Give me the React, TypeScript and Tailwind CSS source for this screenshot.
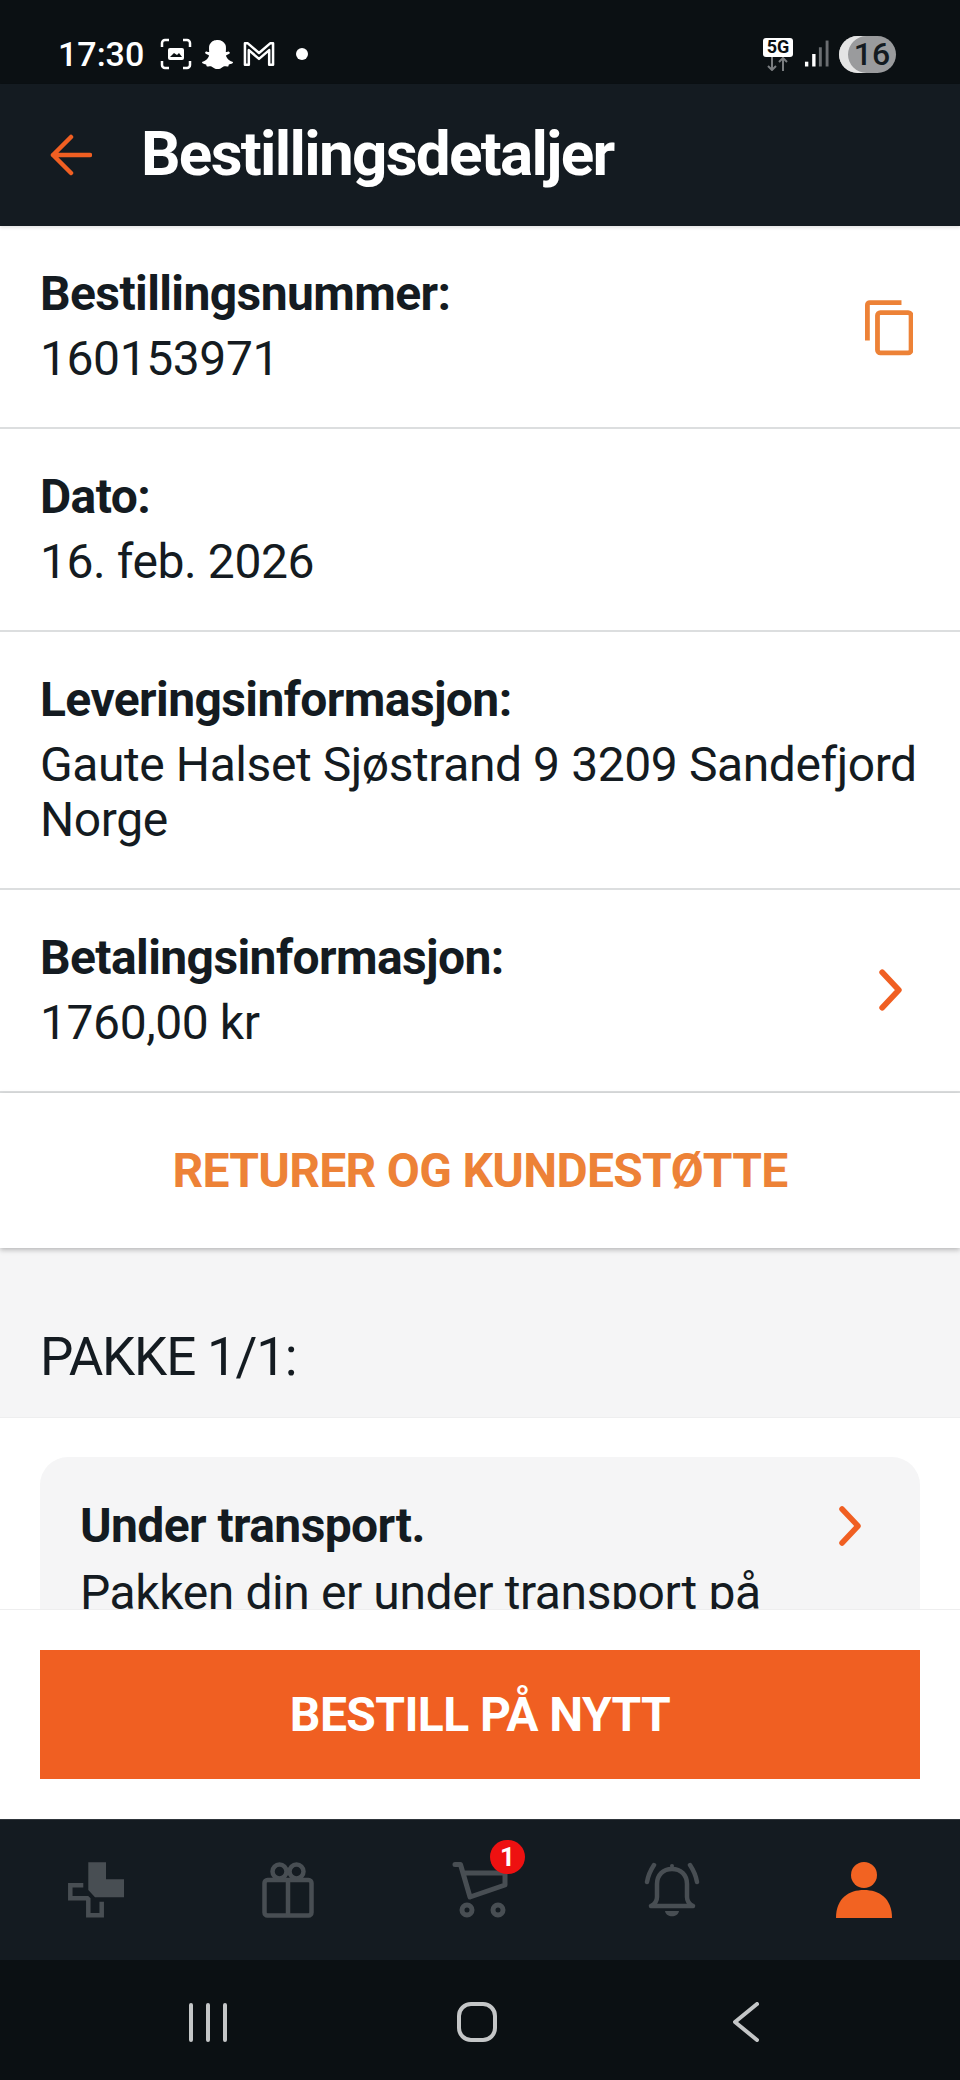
import { FaSnapchatGhost } from "react-icons/fa";

const Row = ({ title, children, icon }: { title: string; children: React.ReactNode; icon?: React.ReactNode }) => (
  <div className="flex items-center justify-between border-b-2 border-[#dcdedf] bg-white pt-[40px] pb-[41px] pl-[40px] pr-[30px]">
    <div>
      <div className="mb-[9px] text-[48px] leading-[56px] font-bold tracking-[-0.6px] text-[#141b21]">{title}</div>
      <div className="text-[48px] leading-[55px] tracking-[-0.42px] text-[#141b21]">{children}</div>
    </div>
    {icon}
  </div>
);

const Chevron = ({ className }: { className: string }) => (
  <svg className={className} viewBox="0 0 24 40" fill="none" stroke="#f05f22" strokeWidth="5.500" strokeLinecap="round" strokeLinejoin="round">
    <path d="M4 3 L20 20 L4 37" />
  </svg>
);

const StatusBar = () => (
  <div className="flex h-[84px] items-center justify-between bg-[#0b1013] pl-[58px] pr-[64px] pt-[24px]">
    <div className="flex items-center">
      <span className="text-[34px] leading-none font-medium text-white">17:30</span>
      <svg className="ml-[16px] h-[32px] w-[32px]" viewBox="0 0 32 32" fill="none" stroke="white" strokeWidth="2.500">
        <path d="M2 9V5a3 3 0 0 1 3-3h4M23 2h4a3 3 0 0 1 3 3v4M30 23v4a3 3 0 0 1-3 3h-4M9 30H5a3 3 0 0 1-3-3v-4" />
        <rect x="8" y="10" width="16" height="12" rx="2" fill="white" stroke="none" />
        <path d="M10 19l4-4 3 2 2-2 3 4z" fill="#0b1013" stroke="none" />
      </svg>
      <FaSnapchatGhost className="ml-[10px] h-[31px] w-[31px] text-white" />
      <svg className="ml-[10px] h-[26px] w-[32px]" viewBox="0 0 33 26" fill="none" stroke="white" strokeWidth="2.600" strokeLinejoin="round">
        <path d="M2 24V2h3l11.500 10L28 2h3v22h-4V9l-10.500 9L6 9v15z" />
      </svg>
      <div className="ml-[21px] h-[12px] w-[12px] rounded-full bg-white" />
    </div>
    <div className="flex items-center">
      <div className="flex w-[30px] flex-col items-center">
        <div className="flex h-[19px] w-[30px] items-center justify-center rounded-[3px] bg-white text-[18px] leading-none font-bold text-[#0b1013]">5G</div>
        <svg className="h-[14px] w-[24px]" viewBox="0 0 24 14" fill="none" stroke="#7a7d80" strokeWidth="2">
          <path d="M6 0v13M2 9l4 4 4-4M17 14V1M13 5l4-4 4 4" />
        </svg>
      </div>
      <svg className="ml-[11px] h-[28px] w-[25px]" viewBox="0 0 26 28">
        <rect x="1" y="22" width="3.500" height="5" fill="white" />
        <rect x="8.500" y="14" width="3.500" height="13" fill="white" />
        <rect x="15.500" y="7" width="3" height="20" fill="#6b6e71" />
        <rect x="22.500" y="0" width="3" height="27" fill="#6b6e71" />
      </svg>
      <div className="ml-[10px] flex h-[37px] w-[57px] items-center justify-center overflow-hidden rounded-full bg-[#9a9b9d] pl-[9px] text-[32px] font-medium text-[#141b21] [box-shadow:inset_9px_0_0_#e4e4e4]">
        16
      </div>
    </div>
  </div>
);

const NavBar = () => (
  <div className="grid h-[141px] grid-cols-5 justify-items-center border-t border-[#30363b] bg-[#141b21] pt-[42px]">
    <svg className="h-[56px] w-[56px]" viewBox="0 0 56 56">
      <path d="M20.300 0.300H38V17.300H56V35.300H27L20.300 28z" fill="#484e53" />
      <path d="M15.300 23.300H2.300V36.300H19.300L20.300 37.300V53.300H33.700V39.700" fill="none" stroke="#484e53" strokeWidth="4.500" />
    </svg>
    <svg className="h-[56px] w-[52px]" viewBox="0 0 52 56" fill="none" stroke="#484e53" strokeWidth="4.500" strokeLinejoin="round">
      <rect x="2.500" y="18" width="47" height="35.500" rx="3" />
      <path d="M26 18v35.500" />
      <circle cx="17.500" cy="9.500" r="7" />
      <circle cx="34.500" cy="9.500" r="7" />
    </svg>
    <div className="relative h-[56px] w-[56px]">
      <svg className="h-[56px] w-[56px]" viewBox="0 0 56 56" fill="none" stroke="#484e53" strokeWidth="5" strokeLinejoin="round" strokeLinecap="round">
        <path d="M3 2.500H8.500L18 35 53 23V11H12" />
        <circle cx="15" cy="48" r="5" />
        <circle cx="46" cy="48" r="5" />
      </svg>
      <div className="absolute top-[-22px] left-[38px] flex h-[34px] w-[35px] items-center justify-center rounded-full bg-[#ee1111] text-[26px] font-bold text-white">1</div>
    </div>
    <svg className="h-[56px] w-[56px]" viewBox="0 0 56 56" fill="none" stroke="#484e53" strokeWidth="4.500" strokeLinejoin="round" strokeLinecap="round">
      <path d="M7 44H49M7 44c4-2 6-5 6-9V22c0-9 6-15 15-15s15 6 15 15V35c0 4 2 7 6 9" />
      <path d="M3 20c1-6 3-11 7-17M53 20c-1-6-3-11-7-17" />
      <path d="M21 49h14c-1 7-13 7-14 0z" fill="#484e53" stroke="none" />
      <circle cx="28" cy="4" r="2" fill="#484e53" stroke="none" />
    </svg>
    <svg className="h-[56px] w-[56px]" viewBox="0 0 56 56" fill="#f26322">
      <circle cx="28" cy="13" r="13" />
      <path d="M0 56c0-20 13-28 28-28s28 8 28 28z" />
    </svg>
  </div>
);

const SystemNav = () => (
  <div className="flex h-[120px] items-start bg-[#0b1013] pl-[189px] pt-[42px]">
    <svg className="h-[40px] w-[38px]" viewBox="0 0 38 40" stroke="#c4c6c7" strokeWidth="4" strokeLinecap="round">
      <path d="M2 3v35M19 3v35M36 3v35" />
    </svg>
    <svg className="ml-[230px] h-[40px] w-[40px]" viewBox="0 0 40 40" fill="none" stroke="#c4c6c7" strokeWidth="4">
      <rect x="2" y="2" width="36" height="36" rx="12" />
    </svg>
    <svg className="ml-[236px] h-[40px] w-[26px]" viewBox="0 0 26 40" fill="none" stroke="#c4c6c7" strokeWidth="4" strokeLinecap="round" strokeLinejoin="round">
      <path d="M24 2 L2 20 L24 38" />
    </svg>
  </div>
);

export default function App() {
  return (
    <div className="flex h-[2080px] w-[960px] flex-col overflow-hidden bg-white font-['Roboto',sans-serif] text-[#141b21]">
      <StatusBar />
      <div className="z-10 flex h-[142px] items-center bg-[#141b21] pl-[50px] [box-shadow:0_2px_3px_rgba(0,0,0,0.1)]">
        <svg className="h-[42px] w-[42px]" viewBox="0 0 42 42" fill="none" stroke="#f05f22" strokeWidth="4.500" strokeLinecap="round" strokeLinejoin="round">
          <path d="M40 21H3M21 3 3 21l18 18" />
        </svg>
        <h1 className="mb-[3px] ml-[49px] text-[62px] font-bold tracking-[-1.7px] text-white">Bestillingsdetaljer</h1>
      </div>

      <div className="min-h-0 flex-1 overflow-hidden">
        <Row
          title="Bestillingsnummer:"
          icon={
            <svg className="mt-[3px] mr-[17px] h-[56px] w-[48px]" viewBox="0 0 50 58" fill="none" stroke="#ed8237" strokeWidth="5">
              <path d="M2.500 42V5a2.500 2.500 0 0 1 2.500-2.500h33" />
              <rect x="13" y="13" width="35" height="42" rx="3" />
            </svg>
          }
        >
          160153971
        </Row>
        <Row title="Dato:">16. feb. 2026</Row>
        <Row title="Leveringsinformasjon:">Gaute Halset Sjøstrand 9 3209 Sandefjord Norge</Row>
        <Row title="Betalingsinformasjon:" icon={<Chevron className="mr-[27px] h-[42px] w-[25px]" />}>
          1760,00 kr
        </Row>
        <div className="relative z-10 flex h-[155px] items-center justify-center bg-white text-[48px] font-bold tracking-[-0.7px] text-[#ed8237] [box-shadow:0_2px_5px_rgba(0,0,0,0.25)]">
          RETURER OG KUNDESTØTTE
        </div>
        <div className="flex h-[169px] items-end bg-[#f5f5f6] pl-[40px] pb-[29px] text-[53px] leading-[62px] tracking-[-1.2px]">PAKKE 1/1:</div>
        <div className="border-t border-[#eeeeef] bg-white px-[40px] pt-[39px]">
          <div className="rounded-[28px] bg-[#f5f5f6] pl-[40px] pr-[41px] pt-[41px] pb-[40px]">
            <div className="flex items-center justify-between">
              <div className="text-[48px] leading-[56px] font-bold tracking-[-0.6px]">Under transport.</div>
              <Chevron className="mr-[17px] h-[40px] w-[24px]" />
            </div>
            <div className="mt-[11px] text-[48px] leading-[55px] tracking-[-0.4px]">Pakken din er under transport på</div>
          </div>
        </div>
      </div>

      <div className="z-10 border-t border-[#eeeeef] bg-white px-[40px] pt-[40px] pb-[40px]">
        <div className="flex h-[129px] items-center justify-center bg-[#f05f22] text-[48px] font-bold tracking-[-0.6px] text-white">BESTILL PÅ NYTT</div>
      </div>
      <NavBar />
      <SystemNav />
    </div>
  );
}
